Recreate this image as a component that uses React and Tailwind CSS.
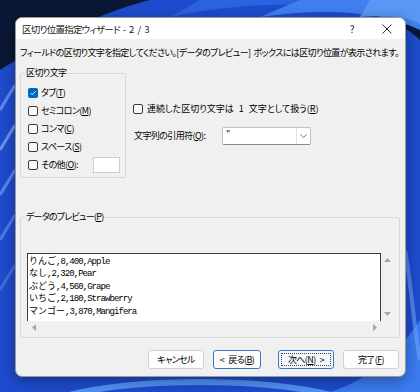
import React from "react";

function Sp({ w }) {
  if (w === 5) return <span className="inline-block w-[5px]" />;
  return <span className={w === 4 ? "inline-block w-[4px]" : "inline-block w-[3px]"} />;
}

function Check({ checked }) {
  if (checked) {
    return (
      <span className="w-[10px] h-[10px] rounded-[2px] bg-[#0067c0] flex items-center justify-center shrink-0">
        <svg width="8" height="8" viewBox="0 0 8 8">
          <path d="M1.6 4.1 L3.2 5.7 L6.5 2.3" stroke="white" strokeWidth="0.9" fill="none" />
        </svg>
      </span>
    );
  }
  return <span className="w-[10px] h-[10px] rounded-[2px] border border-[#3a3a3a] bg-[#f9f9f9] shrink-0" />;
}

function Tri({ dir }) {
  const d = {
    up: "M0 4 L3.5 0 L7 4Z",
    down: "M0 0 L7 0 L3.5 4Z",
    left: "M4 0 L4 7 L0 3.5Z",
    right: "M0 0 L4 3.5 L0 7Z",
  }[dir];
  const w = dir === "up" || dir === "down" ? 7 : 4;
  const h = dir === "up" || dir === "down" ? 4 : 7;
  return (
    <svg width={w} height={h} viewBox={`0 0 ${w} ${h}`}>
      <path d={d} fill="#a6a6a6" />
    </svg>
  );
}

const rows = [
  ["りんご", ",8,400,Apple"],
  ["なし", ",2,320,Pear"],
  ["ぶどう", ",4,560,Grape"],
  ["いちご", ",2,180,Strawberry"],
  ["マンゴー", ",3,870,Mangifera"],
];

export default function App() {
  return (
    <div className="relative w-[420px] h-[392px] overflow-hidden bg-[#0a1838] font-['Noto_Sans_CJK_JP',sans-serif] [font-feature-settings:'palt'] text-black">
      <svg className="absolute inset-0" width="420" height="392" viewBox="0 0 420 392">
        <rect width="420" height="392" fill="#0a1836" />
        <path d="M150 0 C 260 -5 380 0 420 40 L420 392 L0 392 L0 70 C 40 45 90 15 150 0Z" fill="#1e4ccf" />
        <path d="M170 17 C 240 2 330 -2 420 22 L420 0 L200 0Z" fill="#2c63df" />
        <path d="M260 17 C 320 8 380 10 420 30 L420 0 L300 0Z" fill="#3f7ff0" />
        <path d="M360 17 C 390 14 410 18 420 24 L420 0 L370 0Z" fill="#5a97f7" />
        <path d="M0 110 L15 85" stroke="#8fb4ff" strokeWidth="3" opacity="0.6" />
        <path d="M0 150 L15 125" stroke="#9ec0ff" strokeWidth="3" opacity="0.6" />
        <path d="M0 195 L15 170" stroke="#8fb4ff" strokeWidth="3" opacity="0.55" />
        <path d="M0 240 L15 215" stroke="#7ea8ff" strokeWidth="3" opacity="0.5" />
        <path d="M0 290 L15 265" stroke="#6a98f5" strokeWidth="3" opacity="0.45" />
        <ellipse cx="200" cy="418" rx="170" ry="36" fill="none" stroke="#5fa4ff" strokeWidth="6" opacity="0.8" />
        <path d="M330 392 C 370 380 400 350 420 320 L420 392Z" fill="#3b7cf0" />
        <path d="M405 250 C 412 290 414 330 420 360" stroke="#6ea6ff" strokeWidth="4" fill="none" opacity="0.6" />
      </svg>

      <div className="relative ml-[15px] mt-[17px] w-[391px] h-[360px] rounded-[7px] border border-[#9a9a9a] bg-[#f0f0f0] overflow-hidden shadow-[0_4px_16px_rgba(0,0,0,0.35)] flex flex-col">
        {/* title bar */}
        <div className="h-[21px] bg-white flex items-center pl-[6px] text-[9.5px] leading-[12px] text-[#1a1a1a]">
          <span className="flex-1 whitespace-nowrap">
            <span className="tracking-[-0.75px]">区切り位置指定ウィザード</span>
            <Sp />-<Sp />2<Sp />/<Sp />3
          </span>
          <span className="w-[20px] text-center text-[10px] mr-[15px]">?</span>
          <span className="w-[20px] flex justify-center mr-[8px]">
            <svg width="10" height="10" viewBox="0 0 10 10">
              <path d="M0.5 0.5 L9.5 9.5 M9.5 0.5 L0.5 9.5" stroke="#333" strokeWidth="1" />
            </svg>
          </span>
        </div>

        {/* body */}
        <div className="flex-1 flex flex-col pl-[4px] pr-[5px] pt-[7px] text-[9px] tracking-[-0.6px]">
          <div className="h-[13px] leading-[13px] whitespace-nowrap">
            フィールドの区切り文字を指定してください。[データのプレビュー]<Sp />ボックスには区切り位置が表示されます。
          </div>

          <div className="flex items-start mt-[8px]">
            <fieldset className="w-[106px] border border-[#d8d8d8] rounded-[2px] pl-[7px] pr-[5px] pt-[5px] pb-[3px]">
              <legend className="-ml-[3px] px-[1px] h-[12px] leading-[12px]">区切り文字</legend>
              {[
                ["タブ", "T", true],
                ["セミコロン", "M", false],
                ["コンマ", "C", false],
                ["スペース", "S", false],
              ].map(([t, k, c]) => (
                <div key={k} className="h-[18px] flex items-center gap-[3px]">
                  <Check checked={c} />
                  <span className="leading-[12px]">
                    {t}(<u>{k}</u>)
                  </span>
                </div>
              ))}
              <div className="h-[18px] flex items-center gap-[3px]">
                <Check checked={false} />
                <span className="leading-[12px]">
                  その他(<u>O</u>):
                </span>
                <span className="ml-auto w-[27px] h-[16px] bg-white border border-[#cfcfcf]" />
              </div>
            </fieldset>

            <div className="ml-[7px] pt-[35px] flex flex-col">
              <div className="h-[14px] flex items-center gap-[4px]">
                <Check checked={false} />
                <span className="leading-[12px] whitespace-nowrap tracking-normal">
                  連続した区切り文字は<Sp w={5} />1<Sp w={5} />文字として扱う(<u>R</u>)
                </span>
              </div>
              <div className="mt-[11px] flex items-center">
                <span className="w-[89px] pl-[1px] leading-[12px] whitespace-nowrap">
                  文字列の引用符(<u>Q</u>):
                </span>
                <div className="w-[89px] h-[18px] bg-white border border-[#c4c4c4] border-b-[#8a8a8a] rounded-[2px] flex items-start">
                  <span className="flex-1 pl-[3px] leading-[12px] text-[9px]">"</span>
                  <span className="w-px h-[16px] bg-[#e2e2e2]" />
                  <span className="w-[13px] h-[16px] flex items-center justify-center">
                    <svg width="7" height="4" viewBox="0 0 7 4">
                      <path d="M0.5 0.5 L3.5 3.5 L6.5 0.5" stroke="#666" strokeWidth="0.9" fill="none" />
                    </svg>
                  </span>
                </div>
              </div>
            </div>
          </div>

          <fieldset className="mt-[33px] w-[380px] border border-[#d8d8d8] rounded-[2px] pl-[6px] pr-[5px] pt-[30px] pb-[3px]">
            <legend className="-ml-[2px] px-[1px] h-[12px] leading-[12px] tracking-[-0.75px]">
              データのプレビュー(<u>P</u>)
            </legend>
            <div className="grid grid-cols-[354px_13px] grid-rows-[68px_13px]">
              <div className="bg-white border-t border-l border-r border-[#3c3c3c] pt-[1px] pl-[1px] overflow-hidden">
                {rows.map(([j, a]) => (
                  <div key={j} className="h-[12.4px] leading-[12.4px] whitespace-nowrap text-[9px] tracking-normal [font-feature-settings:normal]">
                    <span className="font-['Noto_Sans_CJK_JP',sans-serif]">{j}</span>
                    <span className="font-['Liberation_Mono',monospace] tracking-[-0.95px]">{a}</span>
                  </div>
                ))}
              </div>
              <div className="flex flex-col items-center justify-between pt-[5px] pb-[5px]">
                <Tri dir="up" />
                <Tri dir="down" />
              </div>
              <div className="flex items-center justify-between pl-[5px] pr-[4px]">
                <Tri dir="left" />
                <Tri dir="right" />
              </div>
              <div />
            </div>
          </fieldset>

          <div className="mt-[12px] flex items-center justify-end pr-[1px]">
            <button className="w-[56px] h-[19px] bg-[#fdfdfd] border border-[#d0d0d0] rounded-[3px] leading-[12px]">
              キャンセル
            </button>
            <button className="ml-[9px] w-[48px] h-[19px] bg-[#fdfdfd] border border-[#3a78c6] rounded-[3px] leading-[12px]">
              &lt;<Sp w={4} />戻る(<u>B</u>)
            </button>
            <button className="ml-[17px] w-[56px] h-[19px] bg-[#f4f8fc] border border-[#3a78c6] rounded-[3px] p-[2px]">
              <span className="w-full h-full flex items-center justify-center border border-dotted border-[#444] leading-[12px]">
                次へ(<u>N</u>)<Sp w={4} />&gt;
              </span>
            </button>
            <button className="ml-[9px] w-[56px] h-[19px] bg-[#fdfdfd] border border-[#d0d0d0] rounded-[3px] leading-[12px]">
              完了(<u>F</u>)
            </button>
          </div>
        </div>
      </div>
    </div>
  );
}
